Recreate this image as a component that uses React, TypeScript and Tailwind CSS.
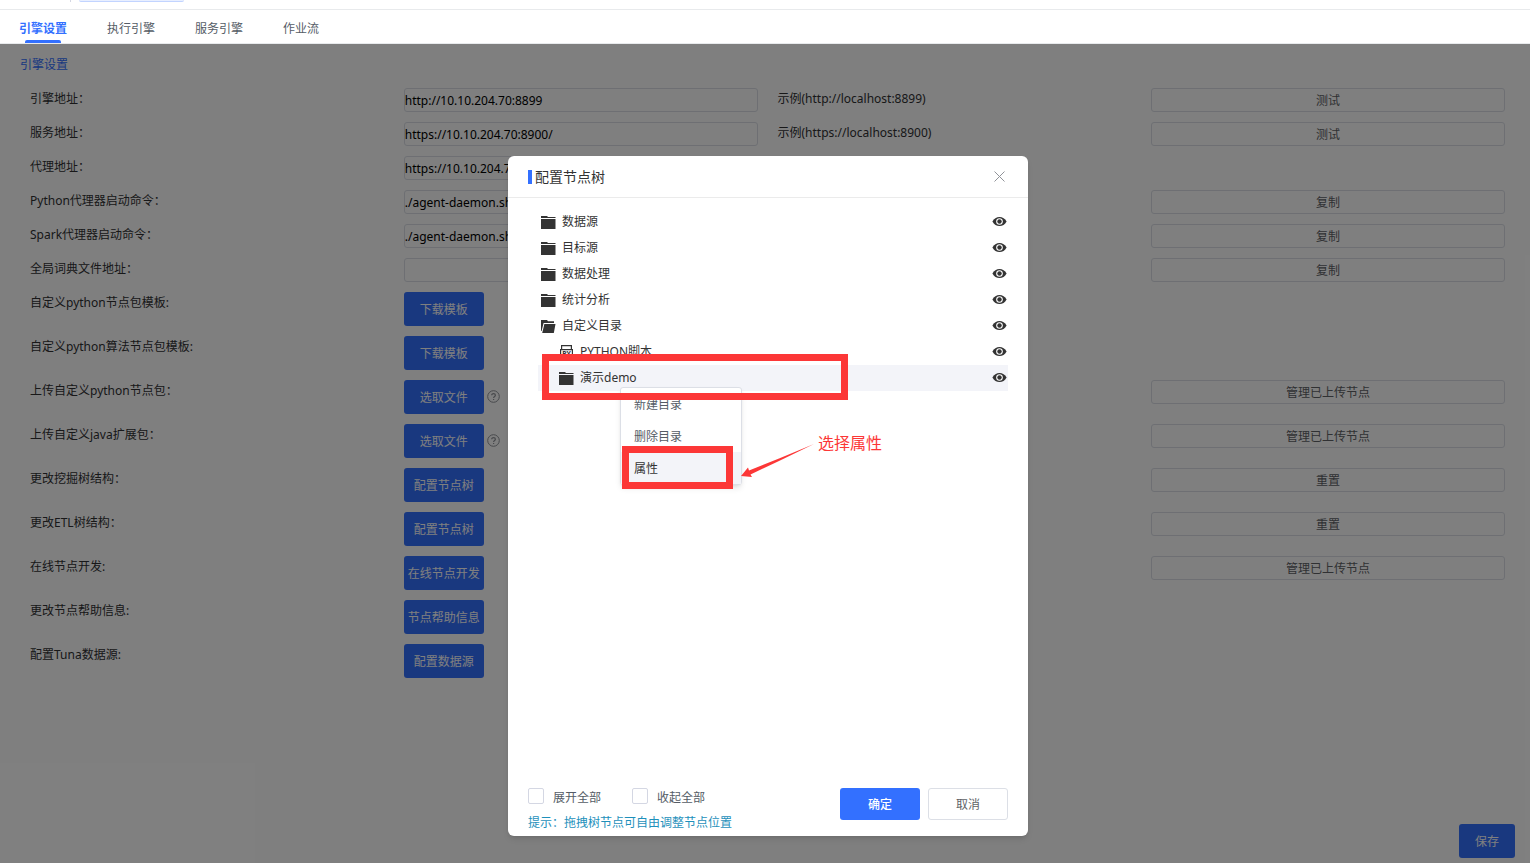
import { useState } from "react";

const tabs = ["引擎设置", "执行引擎", "服务引擎", "作业流"];

type Row = {
  label: string;
  value?: string;
  primary?: string;
  help?: boolean;
  hint?: string;
  action?: string;
};

const rows: Row[] = [
  { label: "引擎地址：", value: "http://10.10.204.70:8899", hint: "示例(http://localhost:8899)", action: "测试" },
  { label: "服务地址：", value: "https://10.10.204.70:8900/", hint: "示例(https://localhost:8900)", action: "测试" },
  { label: "代理地址：", value: "https://10.10.204.70:8900/" },
  { label: "Python代理器启动命令：", value: "./agent-daemon.sh", action: "复制" },
  { label: "Spark代理器启动命令：", value: "./agent-daemon.sh", action: "复制" },
  { label: "全局词典文件地址：", value: "", action: "复制" },
  { label: "自定义python节点包模板:", primary: "下载模板" },
  { label: "自定义python算法节点包模板:", primary: "下载模板" },
  { label: "上传自定义python节点包：", primary: "选取文件", help: true, action: "管理已上传节点" },
  { label: "上传自定义java扩展包：", primary: "选取文件", help: true, action: "管理已上传节点" },
  { label: "更改挖掘树结构：", primary: "配置节点树", action: "重置" },
  { label: "更改ETL树结构：", primary: "配置节点树", action: "重置" },
  { label: "在线节点开发:", primary: "在线节点开发", action: "管理已上传节点" },
  { label: "更改节点帮助信息:", primary: "节点帮助信息" },
  { label: "配置Tuna数据源:", primary: "配置数据源" },
];

const nodes = [
  { name: "数据源", icon: "folder", child: false },
  { name: "目标源", icon: "folder", child: false },
  { name: "数据处理", icon: "folder", child: false },
  { name: "统计分析", icon: "folder", child: false },
  { name: "自定义目录", icon: "open", child: false },
  { name: "PYTHON脚本", icon: "script", child: true },
  { name: "演示demo", icon: "folder", child: true },
];

const menu = ["新建目录", "删除目录", "属性"];

function NodeIcon({ type }: { type: string }) {
  if (type === "open") {
    return (
      <svg width="15" height="14" viewBox="0 0 15 14" fill="#333" className="shrink-0">
        <path d="M0 1h6l1 1.2h6V4H2.6L.6 12H0z" />
        <path d="M3.4 5H14.5L12.8 14H1.2z" />
      </svg>
    );
  }
  if (type === "script") {
    return (
      <svg width="15" height="14" viewBox="0 0 15 14" fill="none" stroke="#333" strokeWidth="1.2" className="shrink-0">
        <path d="M2.6 5V.6h9.8V5" />
        <path d="M1.6 4.6h11.8v6.8H1.6z" />
        <text x="7.5" y="10.5" textAnchor="middle" fill="#333" stroke="none" className="text-[7px] font-bold">
          PY
        </text>
        <path d="M2.6 11.4v2h9.8v-2" />
      </svg>
    );
  }
  return (
    <svg width="15" height="14" viewBox="0 0 15 14" fill="#333" className="shrink-0">
      <path d="M0 1h6l1 1h7.5v1H0z" />
      <path d="M0 4h14.5v10H0z" />
    </svg>
  );
}

function EyeIcon() {
  return (
    <svg width="15" height="12" viewBox="0 0 15 12">
      <path d="M.4 5.5C2 2.5 4.5 1 7.5 1S13 2.5 14.6 5.5C13 8.5 10.5 10 7.5 10S2 8.5 .4 5.5z" fill="#333" />
      <circle cx="7.5" cy="5.5" r="3.3" fill="#fff" />
      <circle cx="7.5" cy="5.5" r="2.2" fill="#333" />
    </svg>
  );
}

function HelpIcon() {
  return (
    <svg width="13" height="13" viewBox="0 0 13 13" fill="none" stroke="#909399" strokeWidth="1" className="mt-2.5 shrink-0">
      <circle cx="6.5" cy="6.5" r="5.8" />
      <path d="M4.7 5.3c0-2.4 3.7-2.3 3.7-.1 0 1.3-1.8 1.3-1.8 2.8M6.6 8.9v1.1" strokeWidth="1.2" />
    </svg>
  );
}

function NodeTreeDialog() {
  const [expand, setExpand] = useState(false);
  const [collapse, setCollapse] = useState(false);

  return (
    <div role="dialog" aria-label="配置节点树" className="relative flex h-[680px] w-[520px] flex-col rounded-md bg-white shadow-md">
      <div className="flex h-[42px] items-center justify-between border-b border-[#ebebeb] px-5">
        <div className="flex items-center gap-[3px]">
          <span className="h-3.5 w-1 bg-[#3370ff]" />
          <h2 className="text-[14px] leading-5 text-[#333]">配置节点树</h2>
        </div>
        <button aria-label="关闭" className="mr-[3px]">
          <svg width="11" height="11" viewBox="0 0 11 11" stroke="#909399" strokeWidth="1">
            <path d="M.5 .5l10 10M10.5 .5l-10 10" />
          </svg>
        </button>
      </div>

      <ul className="flex-1 pt-[11px] pr-5 pl-[30px]">
        {nodes.map((node) => (
          <li
            key={node.name}
            className={`flex h-[26px] items-center justify-between pr-px ${node.child ? "pl-[21px]" : "pl-[3px]"} ${
              node.name === "演示demo" ? "bg-[#f3f4f9]" : ""
            }`}
          >
            <span className="flex items-center gap-1.5 leading-5 text-[#333]">
              <NodeIcon type={node.icon} />
              {node.name}
            </span>
            <button aria-label={`显示${node.name}`}>
              <EyeIcon />
            </button>
          </li>
        ))}
      </ul>

      <div className="flex justify-between px-5 pb-0.5">
        <div>
          <div className="flex gap-[31px] leading-5 text-[#555c66]">
            <label className="flex items-start gap-[9px]">
              <input
                type="checkbox"
                checked={expand}
                onChange={() => setExpand(!expand)}
                className="size-4 appearance-none rounded-xs border border-[#d4d7e3] checked:bg-[#3370ff]"
              />
              展开全部
            </label>
            <label className="flex items-start gap-[9px]">
              <input
                type="checkbox"
                checked={collapse}
                onChange={() => setCollapse(!collapse)}
                className="size-4 appearance-none rounded-xs border border-[#d4d7e3] checked:bg-[#3370ff]"
              />
              收起全部
            </label>
          </div>
          <p className="mt-1 leading-[22px] text-[#1e90bb]">提示：拖拽树节点可自由调整节点位置</p>
        </div>
        <div className="flex gap-2">
          <button className="h-8 w-20 rounded-[3px] bg-[#3370ff] pt-0.5 font-medium text-white">确定</button>
          <button className="h-8 w-20 rounded-[3px] border border-[#dcdfe6] pt-0.5 text-[#606266]">取消</button>
        </div>
      </div>

      {/* Context menu */}
      <div role="menu" className="absolute top-[231px] left-[112px] w-[122px] rounded-[3px] border border-[#dcdfe6] bg-white shadow-md">
        {menu.map((item) => (
          <button
            key={item}
            role="menuitem"
            className={`block h-8 w-full px-[13px] pt-0.5 text-left ${
              item === "属性" ? "bg-[#f3f4f9] text-[#333]" : "text-[#555c66]"
            }`}
          >
            {item}
          </button>
        ))}
      </div>

      {/* Red annotations */}
      <div className="pointer-events-none absolute top-[198px] left-[34px] h-[46px] w-[306px] border-7 border-[#fc3737]" />
      <div className="pointer-events-none absolute top-[290px] left-[114px] h-[43px] w-[111px] border-7 border-[#fc3737]" />
      <svg width="74" height="36" viewBox="0 0 74 36" className="pointer-events-none absolute top-[287px] left-[233px]" fill="#fc3737">
        <path d="M73 1L38 18 9.5 31.5 11 34 0 33 7 24.5 8 27.5 38 15.5z" />
      </svg>
      <span className="absolute top-[275px] left-[310px] text-[16px] leading-6 whitespace-nowrap text-[#fc3737]">选择属性</span>
    </div>
  );
}

export default function App() {
  const [active, setActive] = useState("引擎设置");

  return (
    <div className="flex min-h-screen flex-col bg-white font-['Noto_Sans','Noto_Sans_CJK_SC',sans-serif] text-[12px] text-[#303133]">
      <div className="flex h-2.5 items-start border-b border-[#e8eaec] pl-[70px]">
        <span className="h-0.5 w-px bg-[#d4d7e3]" />
        <span className="ml-2 h-0.5 w-[105px] rounded-b-sm border-b border-[#c2d4ff] bg-[#e8efff]" />
      </div>

      <nav className="flex h-[34px] gap-10 border-b border-[#e8eaec] px-[19px]">
        {tabs.map((tab) => (
          <button
            key={tab}
            onClick={() => setActive(tab)}
            className={`flex flex-col items-center justify-between pt-2 leading-[22px] ${
              tab === active ? "font-bold text-[#3370ff]" : "text-[#555c66]"
            }`}
          >
            {tab}
            {tab === active && <span className="h-[3px] w-9 rounded-t-xs bg-[#3370ff]" />}
          </button>
        ))}
      </nav>

      <main className="relative flex flex-1 flex-col">
        <h1 className="px-5 pt-2.5 leading-[22px] text-[#3370ff]">引擎设置</h1>

        <div className="mt-3 flex flex-1 flex-col gap-2.5 pr-[25px] pl-[30px]">
          {rows.map((row, i) => (
            <div key={row.label} className="grid grid-cols-4 items-start gap-5">
              <label htmlFor={`field-${i}`} className="leading-[22px]">
                {row.label}
              </label>
              {row.primary ? (
                <div className="flex gap-[3px]">
                  <button id={`field-${i}`} className="h-[34px] w-20 rounded-[3px] bg-[#3370ff] pt-0.5 whitespace-nowrap text-white">
                    {row.primary}
                  </button>
                  {row.help && <HelpIcon />}
                </div>
              ) : (
                <input
                  id={`field-${i}`}
                  defaultValue={row.value}
                  className="h-6 w-full rounded-[3px] border border-[#dcdfe6] text-black"
                />
              )}
              <span className="leading-[22px]">{row.hint}</span>
              {row.action && (
                <button className="h-6 rounded-[3px] border border-[#dcdfe6] pt-0.5 text-[#606266]">{row.action}</button>
              )}
            </div>
          ))}
        </div>

        <div className="flex justify-end pr-[15px] pb-[5px]">
          <button className="h-[34px] w-14 rounded-[3px] bg-[#3370ff] pt-0.5 text-white">保存</button>
        </div>

        <div className="absolute inset-0 flex items-start justify-center bg-black/50 pt-28 pl-1.5">
          <NodeTreeDialog />
        </div>
      </main>
    </div>
  );
}
